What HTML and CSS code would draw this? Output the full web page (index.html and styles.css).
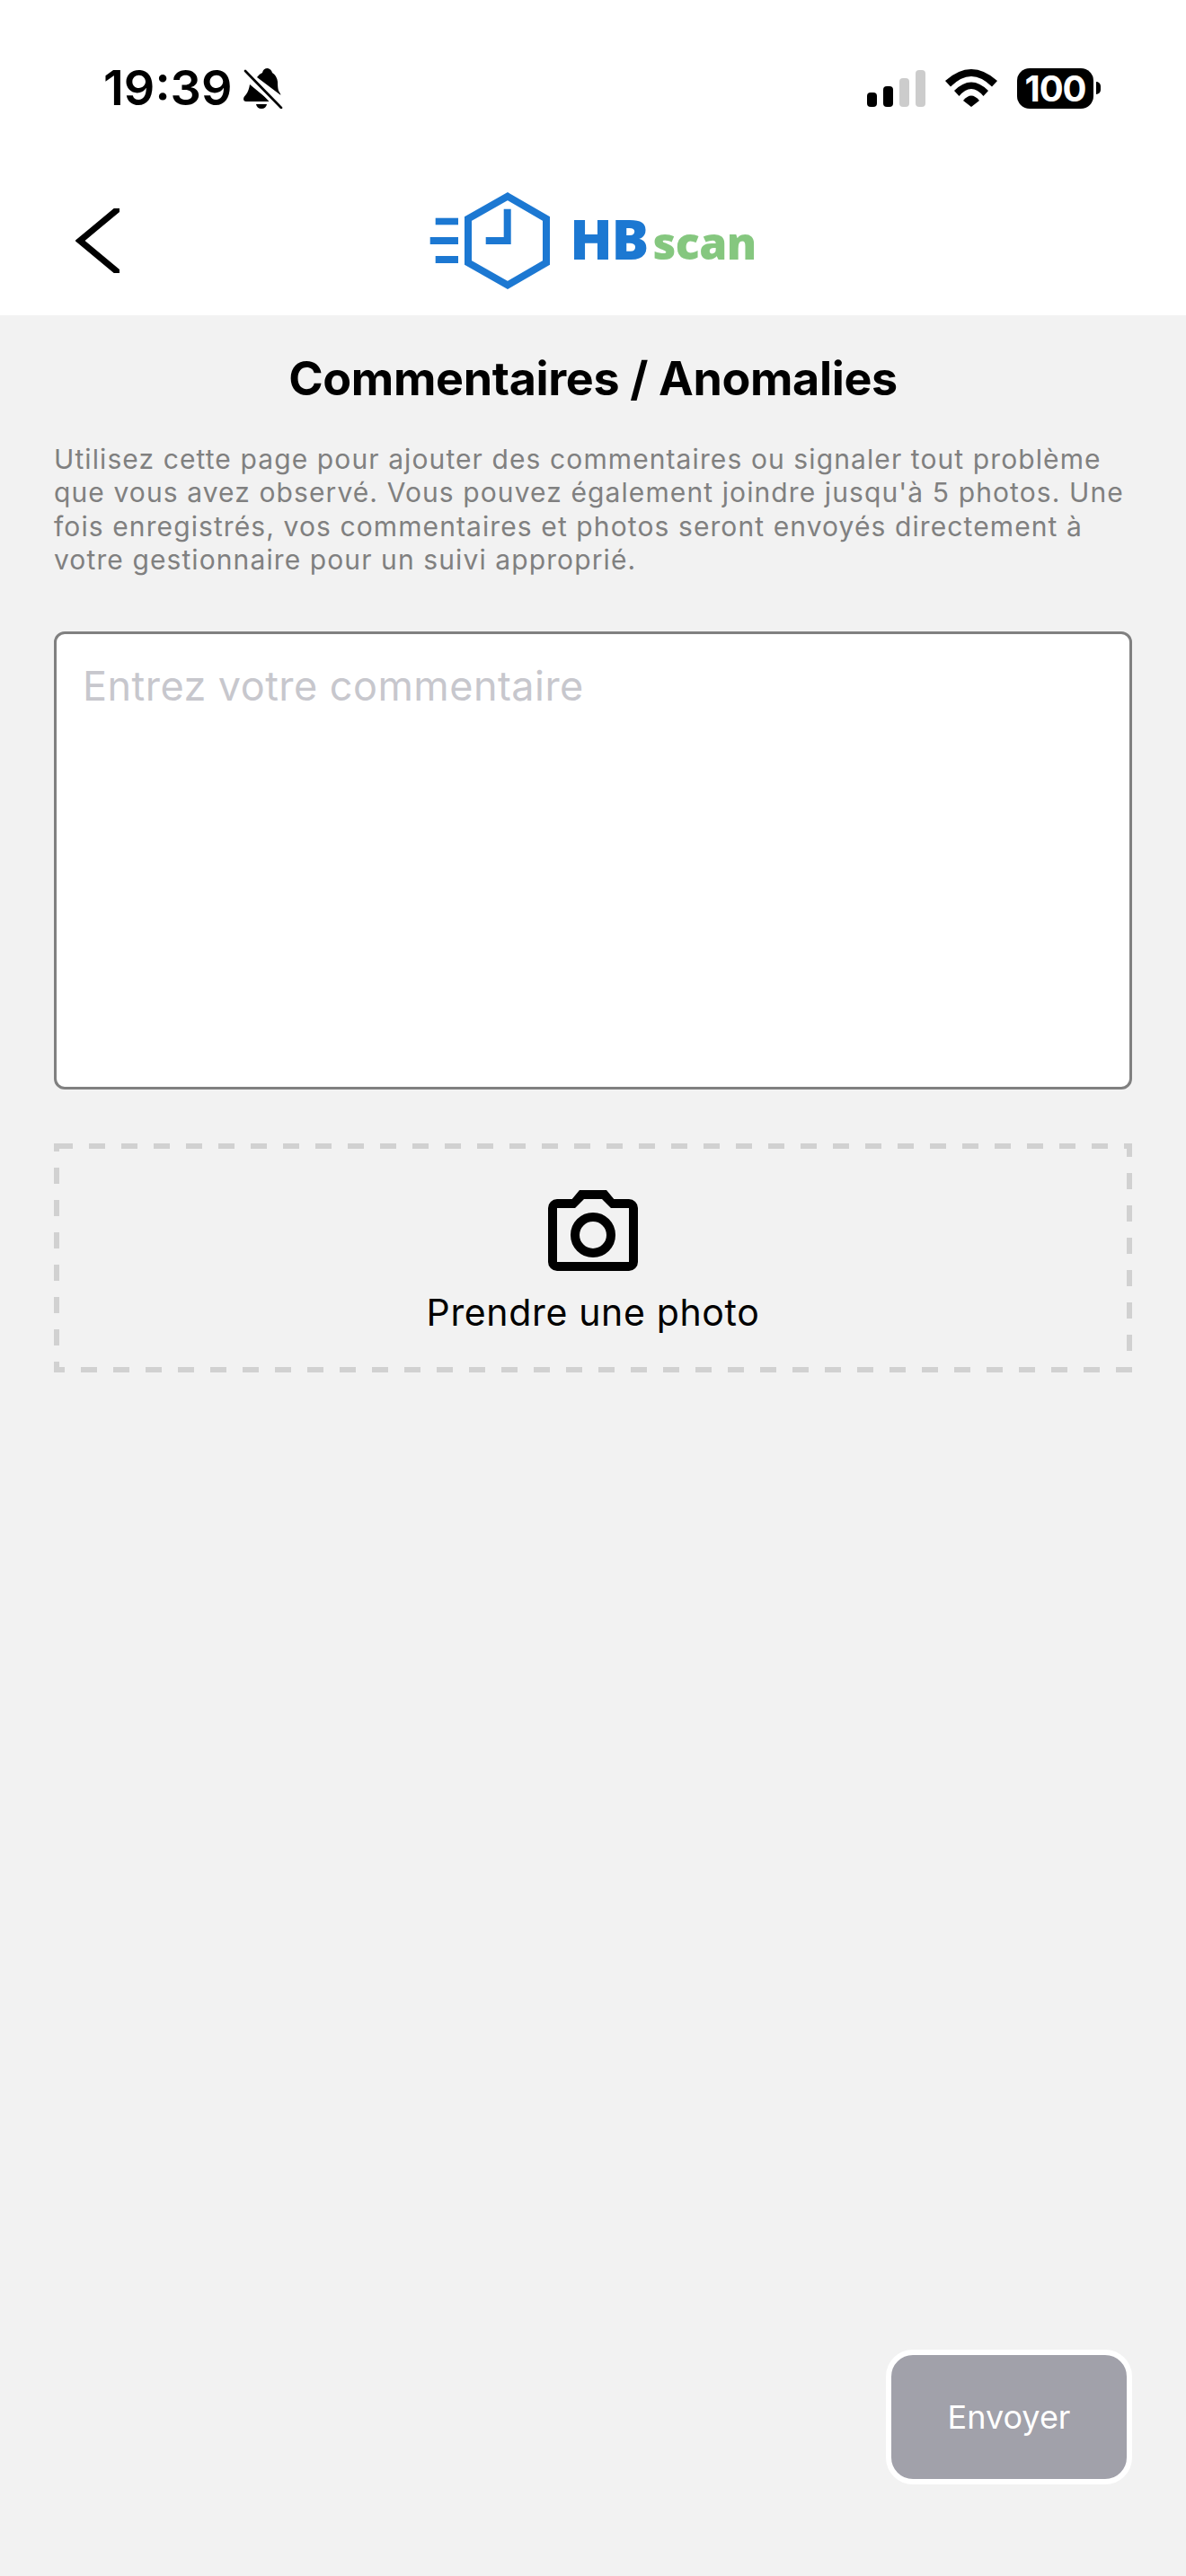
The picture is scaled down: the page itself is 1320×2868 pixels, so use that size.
FILE: index.html
```html
<!DOCTYPE html>
<html lang="fr">
<head>
<meta charset="utf-8">
<title>Commentaires / Anomalies</title>
<link rel="stylesheet" href="styles.css">
</head>
<body>
<div class="top">
  <div class="status">
    <div class="status-left">
      <span class="time">19:39</span>
      <svg class="bell" viewBox="0 0 45 45" width="45" height="45">
        <path fill="#000" d="M15 10 Q18 6 21 5 Q22 0 27 0 Q31 1 32 5 Q37 8 38 15 Q38 22 39 25 Q41 28 41.5 30 Z"/>
        <path fill="#000" d="M7 18 L30 37 H3 Q0 37 0 34 Q0 32 3 29 Q6 25 7 18 Z"/>
        <path fill="#000" d="M14 40 H26 Q25 45 20 45 Q15 45 14 40 Z"/>
        <path stroke="#fff" stroke-width="6" d="M0 0 L44 50" transform="translate(-1 -1)"/>
        <path stroke="#000" stroke-width="2.6" stroke-linecap="round" d="M2 3 L42 44"/>
      </svg>
    </div>
    <div class="status-right">
      <div class="signal">
        <span class="bar b1"></span>
        <span class="bar b2"></span>
        <span class="bar b3 off"></span>
        <span class="bar b4 off"></span>
      </div>
      <svg class="wifi" viewBox="0 0 58 42" width="58" height="42">
        <path d="M0 13 Q29 -13 58 13 L52 19.5 Q29 -3.5 6 19.5 Z"/>
        <path d="M10 24 Q29 5 48 24 L42.5 30 Q29 14 15.5 30 Z"/>
        <path d="M20 35 Q29 24 38 35 L29 42 Z"/>
      </svg>
      <div class="battery">
        <span class="battery-level">100</span>
        <span class="battery-nub"></span>
      </div>
    </div>
  </div>
  <div class="nav">
    <svg class="back" viewBox="0 0 49 72" width="49" height="72">
      <polyline points="53,-4 5,36 53,76" fill="none" stroke="#000" stroke-width="7"/>
    </svg>
    <div class="logo">
      <svg viewBox="0 0 135 108" width="135" height="108">
        <polygon points="87,4.6 130,29.5 130,78.5 87,103.4 43,78.5 43,29.5" fill="none" stroke="#1c78d2" stroke-width="8"/>
        <rect x="6.7" y="28.7" width="25.3" height="7.6" fill="#1c78d2"/>
        <rect x="0.7" y="50" width="31.3" height="8" fill="#1c78d2"/>
        <rect x="6.7" y="71" width="25.3" height="8" fill="#1c78d2"/>
        <path d="M82.7 18.7 H90.7 V58 H62.7 V50 H82.7 Z" fill="#1c78d2"/>
      </svg>
      <span class="logo-text"><span class="hb">HB</span><span class="scan">scan</span></span>
    </div>
  </div>
</div>

<div class="content">
  <h1 class="title">Commentaires / Anomalies</h1>
  <p class="intro">Utilisez cette page pour ajouter des commentaires ou signaler tout problème<br>que vous avez observé. Vous pouvez également joindre jusqu'à 5 photos. Une<br>fois enregistrés, vos commentaires et photos seront envoyés directement à<br>votre gestionnaire pour un suivi approprié.</p>
  <div class="comment">Entrez votre commentaire</div>
  <div class="photo">
    <svg class="photo-border" viewBox="0 0 1200 255" width="1200" height="255">
      <rect x="3" y="3" width="1194" height="249" fill="none" stroke="#d1d1d1" stroke-width="6" stroke-dasharray="18 18"/>
    </svg>
    <div class="photo-inner">
      <svg viewBox="0 0 100 90" width="100" height="90">
        <path fill="#000" fill-rule="evenodd" d="M35 0 H65 L73.3 10 H90 A10 10 0 0 1 100 20 V80 A10 10 0 0 1 90 90 H10 A10 10 0 0 1 0 80 V20 A10 10 0 0 1 10 10 H26.7 Z M10 20 V80 H90 V20 H70 L60 10 H40 L30 20 Z"/>
        <circle cx="50" cy="50" r="20" fill="none" stroke="#000" stroke-width="10"/>
      </svg>
      <span class="photo-label">Prendre une photo</span>
    </div>
  </div>
  <div class="send">Envoyer</div>
</div>
</body>
</html>
```

FILE: styles.css
```css
html, body {
  margin: 0;
  padding: 0;
}
body {
  width: 1320px;
  height: 2868px;
  display: flex;
  flex-direction: column;
  background: #f2f2f2;
  font-family: Inter, "Liberation Sans", sans-serif;
  color: #000;
  overflow: hidden;
}

/* status bar + logo */
.top {
  height: 351px;
  background: #fff;
}
.status {
  display: flex;
  justify-content: space-between;
  align-items: center;
  height: 46px;
  padding: 75px 95px 0 115px;
}
.status-left {
  display: flex;
  align-items: center;
  gap: 12px;
}
.time {
  font-size: 54px;
  font-weight: 600;
  line-height: 46px;
}
.status-right {
  display: flex;
  align-items: center;
}
.signal {
  display: flex;
  align-items: flex-end;
  gap: 7px;
  height: 41px;
  margin-right: 22px;
}
.bar {
  width: 11px;
  background: #000;
  border-radius: 4px;
}
.bar.off {
  background: #ccc;
}
.b1 { height: 16px; }
.b2 { height: 23px; }
.b3 { height: 32px; }
.b4 { height: 41px; }
.wifi {
  margin-right: 22px;
}
.battery {
  display: flex;
  align-items: center;
  gap: 3px;
}
.battery-level {
  width: 85px;
  height: 45px;
  background: #000;
  border-radius: 14px;
  color: #fff;
  font-size: 40px;
  font-weight: 700;
  line-height: 45px;
  text-align: center;
  letter-spacing: -1px;
}
.battery-nub {
  width: 5px;
  height: 14px;
  background: #000;
  border-radius: 0 7px 7px 0;
}
.nav {
  display: grid;
  grid-template-columns: 1fr auto 1fr;
  align-items: center;
  margin-top: 90px;
  padding-left: 84px;
}
.back {
  display: block;
}
.logo {
  display: flex;
  align-items: center;
  margin-left: -84px;
}
.logo svg {
  display: block;
}
.logo-text {
  margin-left: 21px;
  font-family: "Open Sans", sans-serif;
  font-size: 62px;
  font-weight: 800;
  line-height: 108px;
}
.hb {
  color: #1c78d2;
  letter-spacing: -1px;
}
.scan {
  margin-left: 5px;
  color: #85c77f;
  font-size: 50px;
  letter-spacing: -0.5px;
}

/* page */
.content {
  flex: 1;
  display: flex;
  flex-direction: column;
  padding: 38px 60px 102px;
}
.title {
  margin: 0 0 38px;
  font-size: 52px;
  font-weight: 700;
  line-height: 66px;
  letter-spacing: -0.35px;
  text-align: center;
}
.intro {
  margin: 0 0 60px;
  color: #808080;
  font-size: 30px;
  line-height: 37.4px;
  letter-spacing: 1.1px;
}
.comment {
  box-sizing: border-box;
  height: 510px;
  padding: 31px 29px;
  background: #fff;
  border: 3px solid #808080;
  border-radius: 12px;
  color: #c7c7cd;
  font-size: 45px;
  line-height: 54px;
  letter-spacing: 0.46px;
}
.photo {
  display: grid;
  height: 255px;
  margin-top: 60px;
}
.photo-border, .photo-inner {
  grid-area: 1 / 1;
}
.photo-inner {
  display: flex;
  flex-direction: column;
  align-items: center;
  padding-top: 52px;
}
.photo-label {
  margin-top: 21px;
  font-size: 41px;
  line-height: 50px;
  letter-spacing: 0.65px;
}
.send {
  box-sizing: border-box;
  align-self: flex-end;
  width: 274px;
  height: 150px;
  margin-top: auto;
  background: #a1a1aa;
  border: 6px solid #fff;
  border-radius: 30px;
  color: #fff;
  font-size: 36px;
  line-height: 138px;
  text-align: center;
}
```
